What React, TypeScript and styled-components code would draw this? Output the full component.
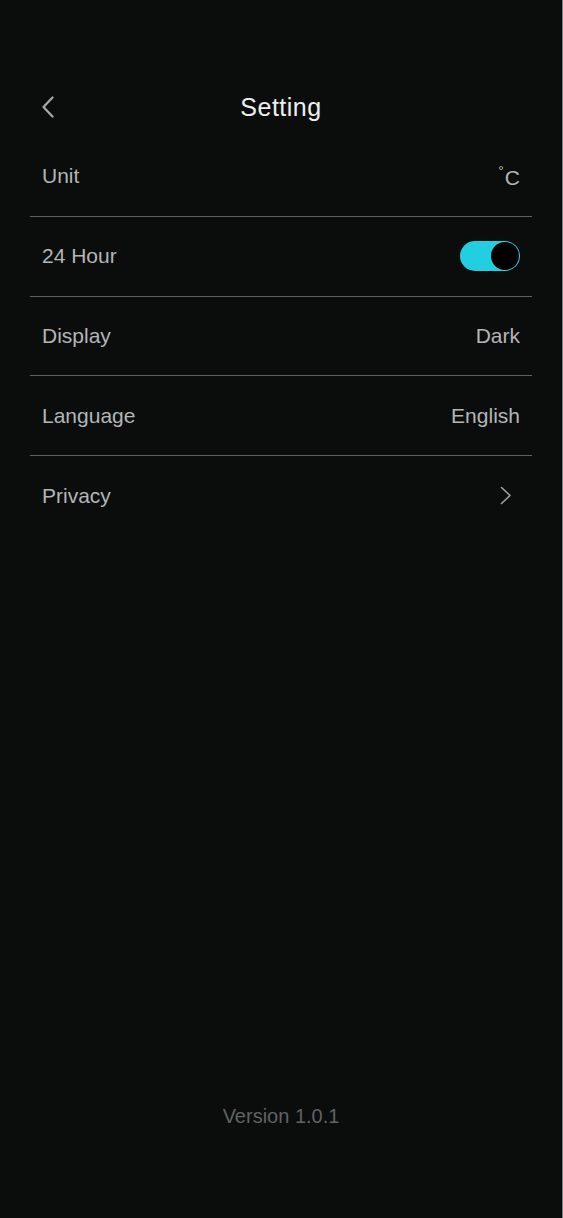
import React, { useState } from "react";
import styled, { createGlobalStyle } from "styled-components";

const GlobalStyle = createGlobalStyle`
  html, body { margin: 0; padding: 0; background: #0b0d0d; }
  * { box-sizing: border-box; }
  body { font-family: "Liberation Sans", Arial, sans-serif; }
`;

const Page = styled.div`
  width: 563px;
  min-height: 1218px;
  background: #0b0d0d;
  border-right: 1px solid #7c7f7f;
  display: flex;
  flex-direction: column;
  padding-top: 77px;
`;

const Header = styled.header`
  height: 60px;
  margin: 0 30px;
  position: relative;
  display: flex;
  align-items: center;
  justify-content: center;
`;

const BackButton = styled.button`
  position: absolute;
  left: 8px;
  top: 50%;
  transform: translateY(-50%);
  background: none;
  border: 0;
  padding: 0;
  width: 20px;
  height: 24px;
  display: flex;
  align-items: center;
  justify-content: center;
  cursor: pointer;
`;

const Title = styled.h1`
  margin: 0;
  font-size: 25px;
  font-weight: 400;
  color: #eeeeee;
  letter-spacing: 0.5px;
`;

const List = styled.ul`
  list-style: none;
  margin: 0 30px;
  padding: 0;
`;

const Row = styled.li<{ $last?: boolean }>`
  height: 79.75px;
  padding: 0 12px;
  display: flex;
  align-items: center;
  justify-content: space-between;
  border-bottom: ${(p) => (p.$last ? "none" : "1px solid #5c6060")};
`;

const Label = styled.span`
  font-size: 21px;
  color: #b2b6b6;
`;

const Value = styled.span`
  font-size: 21px;
  color: #b2b6b6;
`;

const Degree = styled.span`
  font-size: 14px;
  vertical-align: 9px;
  margin-right: 1px;
`;

const Track = styled.button<{ $on: boolean }>`
  width: 60px;
  height: 30px;
  border-radius: 15px;
  border: 0;
  padding: 1px;
  background: ${(p) => (p.$on ? "#22cfe0" : "#3a3e3e")};
  display: flex;
  justify-content: ${(p) => (p.$on ? "flex-end" : "flex-start")};
  align-items: center;
  cursor: pointer;
`;

const Knob = styled.span`
  width: 28px;
  height: 28px;
  border-radius: 50%;
  background: #000;
`;

const ChevronBox = styled.span`
  width: 30px;
  display: flex;
  justify-content: flex-start;
  padding-left: 10px;
`;

const Spacer = styled.div`
  flex: 1;
`;

const Footer = styled.footer`
  text-align: center;
  font-size: 20px;
  line-height: 24px;
  color: #5f6363;
  padding-bottom: 90px;
`;

export default function App() {
  const [on, setOn] = useState(true);
  return (
    <>
      <GlobalStyle />
      <Page>
        <Header>
          <BackButton aria-label="Back">
            <svg width="14" height="22" viewBox="0 0 14 22" fill="none">
              <path d="M11.5 1.5 L2.5 11 L11.5 20.5" stroke="#a6aaaa" strokeWidth="2.2" strokeLinecap="round" strokeLinejoin="round" />
            </svg>
          </BackButton>
          <Title>Setting</Title>
        </Header>
        <List>
          <Row>
            <Label>Unit</Label>
            <Value>
              <Degree>°</Degree>C
            </Value>
          </Row>
          <Row>
            <Label>24 Hour</Label>
            <Track $on={on} onClick={() => setOn(!on)} aria-label="24 Hour">
              <Knob />
            </Track>
          </Row>
          <Row>
            <Label>Display</Label>
            <Value>Dark</Value>
          </Row>
          <Row>
            <Label>Language</Label>
            <Value>English</Value>
          </Row>
          <Row $last>
            <Label>Privacy</Label>
            <ChevronBox>
              <svg width="12" height="19" viewBox="0 0 12 19" fill="none">
                <path d="M1.5 1.5 L10 9.5 L1.5 17.5" stroke="#a0a4a4" strokeWidth="1.6" strokeLinecap="round" strokeLinejoin="round" />
              </svg>
            </ChevronBox>
          </Row>
        </List>
        <Spacer />
        <Footer>Version 1.0.1</Footer>
      </Page>
    </>
  );
}
